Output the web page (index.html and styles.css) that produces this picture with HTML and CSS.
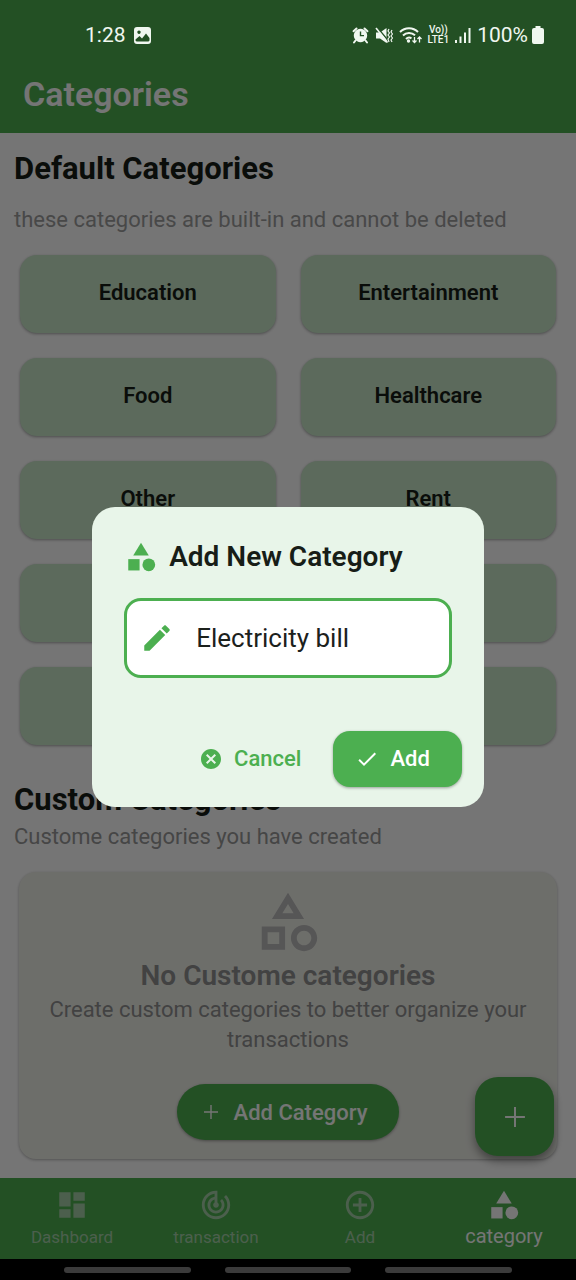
FILE: index.html
```html
<!DOCTYPE html>
<html lang="en">
<head>
<meta charset="utf-8">
<meta name="viewport" content="width=device-width, initial-scale=1">
<title>Categories</title>
<link rel="stylesheet" href="styles.css">
</head>
<body>
<svg class="sprite" aria-hidden="true">
  <symbol id="category" viewBox="0 0 24 24"><path d="M12 2l-5.500 9h11z"/><circle cx="17.500" cy="17.500" r="4.500"/><path d="M3 13.500h8v8H3z"/></symbol>
  <symbol id="plus" viewBox="0 0 24 24"><path d="M19 12.700h-6.300V19h-1.400v-6.300H5v-1.400h6.300V5h1.400v6.300H19z"/></symbol>
</svg>
<div class="app">
  <header class="app-bar">
    <div class="status">
      <div class="status-side">
        <span>1:28</span>
        <svg class="status-photo" viewBox="0 0 17 17"><path fill-rule="evenodd" d="M3 0h11a3 3 0 0 1 3 3v11a3 3 0 0 1-3 3H3a3 3 0 0 1-3-3V3a3 3 0 0 1 3-3zM1.500 12.500v1l1 1h12l1-1v-2.500l-3.500-4.500-4 5-2.500-2.500zM5 3.500a1.700 1.700 0 1 0 .01 0z"/></svg>
      </div>
      <div class="status-side status-right">
        <svg width="17" height="17" viewBox="0 0 17 17"><path fill-rule="evenodd" d="M8.500 1.800a6.700 6.700 0 1 1-.01 0zM7.800 4.500v4.800h4.200V8H9.200V4.500z"/><path d="M1.500 4.200l3-2.700M15.500 4.200l-3-2.700M3.500 13.500L2 15.500M13.500 13.500l1.500 2" fill="none" stroke="currentColor" stroke-width="2" stroke-linecap="round"/></svg>
        <svg width="18" height="17" viewBox="0 0 18 17"><path d="M1 5.500h4L11.500 1v15L5 11.500H1z"/><path d="M2 0l11.500 14" stroke="#245226" stroke-width="1.400"/><path d="M1 1l11.500 14.500" fill="none" stroke="currentColor" stroke-width="1.600"/><path d="M14 2l-1 2 1.500 2-1.500 2 1.500 2-1.500 2 1 3M17 3l-1 2 1.500 2-1.500 2 1.500 2-1.500 2 1 2" fill="none" stroke="currentColor" stroke-width="1.200"/></svg>
        <svg width="23" height="17" viewBox="0 0 23 17"><path d="M1 5a12.500 12.500 0 0 1 18 0M4 8.500a8.500 8.500 0 0 1 12-.200M7 12a4.500 4.500 0 0 1 5.500-.700" fill="none" stroke="currentColor" stroke-width="2"/><circle cx="9.500" cy="14" r="1.700"/><path d="M15.500 10v5.500m-2-2l2 2 2-2M20.500 15.500V10m-2 2l2-2 2 2" fill="none" stroke="currentColor" stroke-width="1.300"/></svg>
        <span class="volte"><span>Vo))</span><span>LTE1</span></span>
        <svg width="16" height="17" viewBox="0 0 16 17"><path d="M0 13h2v3H0zM4.500 9.500h2V16h-2zM9 5.500h2V16H9zM13.500 1h2v15h-2z"/></svg>
        <span class="charge">100%</span>
        <svg width="12" height="18" viewBox="0 0 12 18"><path d="M3.500 0h5v2H10a2 2 0 0 1 2 2v12a2 2 0 0 1-2 2H2a2 2 0 0 1-2-2V4a2 2 0 0 1 2-2h1.500z"/></svg>
      </div>
    </div>
    <h1>Categories</h1>
  </header>

  <main class="page">
    <section>
      <h2>Default Categories</h2>
      <p class="note note-default">these categories are built-in and cannot be deleted</p>
      <div class="tiles">
        <div class="tile">Education</div><div class="tile">Entertainment</div>
        <div class="tile">Food</div><div class="tile">Healthcare</div>
        <div class="tile">Other</div><div class="tile">Rent</div>
        <div class="tile"></div><div class="tile"></div>
        <div class="tile"></div><div class="tile"></div>
      </div>
    </section>
    <section class="custom">
      <h2>Custom Categories</h2>
      <p class="note">Custome categories you have created</p>
      <div class="empty">
        <svg class="empty-icon" viewBox="0 0 24 24"><path fill-rule="evenodd" d="M12 2l-5.500 9h11L12 2zm0 3.840L13.930 9h-3.870L12 5.840zM17.500 13c-2.490 0-4.500 2.010-4.500 4.500s2.010 4.500 4.500 4.500 4.500-2.010 4.500-4.500-2.010-4.500-4.500-4.500zm0 7c-1.380 0-2.500-1.120-2.500-2.500s1.120-2.500 2.500-2.500 2.500 1.120 2.500 2.500-1.120 2.500-2.500 2.500zM3 21.500h8v-8H3v8zm2-6h4v4H5v-4z"/></svg>
        <h3>No Custome categories</h3>
        <p>Create custom categories to better organize your transactions</p>
        <button class="button pill" type="button"><svg><use href="#plus"/></svg>Add Category</button>
      </div>
    </section>
    <button class="fab" type="button" aria-label="Add"><svg><use href="#plus"/></svg></button>
  </main>

  <nav class="tabs">
    <a href="#dashboard"><svg viewBox="0 0 24 24"><path d="M3 13h8V3H3v10zm0 8h8v-6H3v6zm10 0h8V11h-8v10zm0-18v6h8V3h-8z"/></svg><span>Dashboard</span></a>
    <a href="#transaction"><svg viewBox="0 0 24 24"><path d="M19.070 4.930l-1.410 1.410C19.100 7.790 20 9.790 20 12c0 4.420-3.580 8-8 8s-8-3.580-8-8c0-4.080 3.050-7.440 7-7.930v2.020C8.160 6.570 6 9.030 6 12c0 3.310 2.690 6 6 6s6-2.690 6-6c0-1.660-.670-3.160-1.760-4.240l-1.410 1.410C15.550 9.900 16 10.900 16 12c0 2.210-1.790 4-4 4s-4-1.790-4-4c0-1.860 1.280-3.410 3-3.860v2.140c-.600.350-1 .980-1 1.720 0 1.100.900 2 2 2s2-.900 2-2c0-.740-.400-1.380-1-1.720V2h-1C6.480 2 2 6.480 2 12s4.480 10 10 10 10-4.480 10-10c0-2.760-1.120-5.260-2.930-7.070z"/></svg><span>transaction</span></a>
    <a href="#add"><svg viewBox="0 0 24 24"><path fill-rule="evenodd" d="M13 7h-2v4H7v2h4v4h2v-4h4v-2h-4V7zm-1-5C6.480 2 2 6.480 2 12s4.480 10 10 10 10-4.480 10-10S17.520 2 12 2zm0 18c-4.410 0-8-3.590-8-8s3.590-8 8-8 8 3.590 8 8-3.590 8-8 8z"/></svg><span>Add</span></a>
    <a class="current" href="#category-tab" aria-current="page"><svg><use href="#category"/></svg><span>category</span></a>
  </nav>
  <div class="system-bar"><i></i><i></i><i></i></div>

  <div class="scrim">
    <form class="dialog" role="dialog" aria-labelledby="dialog-title">
      <h2 id="dialog-title"><svg><use href="#category"/></svg>Add New Category</h2>
      <div class="field">
        <svg viewBox="0 0 24 24"><path d="M3 17.250V21h3.750L17.810 9.940l-3.750-3.750L3 17.250zM20.710 7.040c.390-.390.390-1.020 0-1.410l-2.340-2.340c-.390-.390-1.020-.390-1.410 0l-1.830 1.830 3.750 3.750 1.830-1.830z"/></svg>
        <input type="text" value="Electricity bill" aria-labelledby="dialog-title">
      </div>
      <div class="actions">
        <button class="button text" type="button"><svg viewBox="0 0 24 24"><path fill-rule="evenodd" d="M12 2C6.470 2 2 6.470 2 12s4.470 10 10 10 10-4.470 10-10S17.530 2 12 2zm5 13.590L15.590 17 12 13.410 8.410 17 7 15.590 10.590 12 7 8.410 8.410 7 12 10.590 15.590 7 17 8.410 13.410 12 17 15.590z"/></svg>Cancel</button>
        <button class="button" type="button"><svg viewBox="0 0 24 24"><path d="M9 16.170L4.830 12l-1.420 1.410L9 19 21 7l-1.410-1.410z"/></svg>Add</button>
      </div>
    </form>
  </div>
</div>
</body>
</html>
```
FILE: styles.css
```css
:root {
  --green: #4caf50;
  --mint: #c8e6c9;
  --pale: #e8f5e9;
}

* { box-sizing: border-box; }

body {
  margin: 0;
  background: #fff;
  color: #171d17;
  font-family: Roboto, "Liberation Sans", sans-serif;
}

h1, h2, h3, p { margin: 0; }
svg { display: block; flex: none; fill: currentColor; }
button, input { font: inherit; }
.sprite { position: absolute; width: 0; height: 0; }

.app {
  position: relative;
  display: flex;
  flex-direction: column;
  min-height: 100vh;
}

.app-bar {
  height: 133px;
  background: var(--green);
  color: #fff;
}
.app-bar h1 {
  padding: 4px 23px;
  font-size: 34px;
  font-weight: 600;
  line-height: 40px;
}
.status {
  position: relative;
  z-index: 2;
  display: flex;
  justify-content: space-between;
  height: 70px;
  padding: 0 32px 0 85px;
  color: #f0f7f0;
  font-size: 21px;
}
.status-side { display: flex; align-items: center; gap: 8px; }
.status-right { gap: 6px; }
.status-photo { width: 17px; height: 17px; }
.volte {
  display: grid;
  font-size: 10px;
  font-weight: 500;
  line-height: 10px;
  text-align: center;
}
.charge { margin-right: -2px; }

.page {
  position: relative;
  flex: 1;
  padding: 18px 14px 18px;
}
.page h2 { font-size: 31px; line-height: 36px; }
.note {
  color: #9e9e9e;
  font-size: 22px;
  line-height: 28px;
}
.note-default { margin-top: 19px; }
.tiles {
  display: grid;
  grid-template-columns: 1fr 1fr;
  gap: 25px;
  margin: 21px 6px 0;
}
.tile {
  display: grid;
  place-items: center;
  height: 78px;
  padding-bottom: 3px;
  border-radius: 17px;
  background: var(--mint);
  box-shadow: 0 1px 3px rgba(0, 0, 0, .35);
  font-size: 22px;
  font-weight: 600;
}
.custom { margin-top: 37px; }
.custom .note { margin-top: 5px; color: #989898; }

.empty {
  display: flex;
  flex-direction: column;
  align-items: center;
  margin: 21px 5px 0;
  padding: 15px 22px 19px;
  border-radius: 17px;
  background: #eeefe8;
  box-shadow: 0 1px 3px rgba(0, 0, 0, .3);
  color: #909090;
  text-align: center;
}
.empty-icon { width: 70px; height: 70px; color: #bbb; }
.empty h3 { font-size: 28px; font-weight: 600; line-height: 38px; }
.empty p { font-size: 22px; line-height: 30px; }
.empty .button { margin-top: 29px; }

.button {
  display: flex;
  align-items: center;
  gap: 11px;
  height: 56px;
  padding: 0 32px 0 22px;
  border: 0;
  border-radius: 17px;
  background: var(--green);
  box-shadow: 0 1px 3px rgba(0, 0, 0, .35);
  color: #fff;
  font-size: 22px;
  font-weight: 500;
}
.button svg { width: 24px; height: 24px; }
.button.pill { border-radius: 28px; }
.button.text { background: none; box-shadow: none; color: var(--green); }

.fab {
  position: absolute;
  right: 22px;
  bottom: 22px;
  display: grid;
  place-items: center;
  width: 79px;
  height: 79px;
  border: 0;
  border-radius: 23px;
  background: var(--green);
  box-shadow: 0 5px 10px rgba(0, 0, 0, .4);
  color: #fff;
}
.fab svg { width: 34px; height: 34px; }

.tabs {
  display: grid;
  grid-template-columns: repeat(4, 1fr);
  height: 81px;
  background: var(--green);
}
.tabs a {
  display: flex;
  flex-direction: column;
  align-items: center;
  padding-top: 10px;
  color: #a6cfa8;
  font-size: 17px;
  line-height: 30px;
  text-decoration: none;
}
.tabs svg { width: 34px; height: 34px; }
.tabs .current { color: #fff; font-size: 20px; line-height: 28px; }

.system-bar {
  display: flex;
  justify-content: center;
  align-items: center;
  gap: 34px;
  height: 21px;
  background: #000;
}
.system-bar i {
  width: 22%;
  height: 6px;
  border-radius: 3px;
  background: #808080;
}

.scrim {
  position: absolute;
  inset: 0;
  z-index: 1;
  display: flex;
  align-items: center;
  padding: 33px 16% 0;
  background: rgba(0, 0, 0, .54);
}
.dialog {
  flex: 1;
  min-width: 0;
  padding: 32px 22px 20px 32px;
  border-radius: 23px;
  background: var(--pale);
}
.dialog h2 {
  display: flex;
  align-items: center;
  gap: 11px;
  font-size: 28px;
  font-weight: 600;
  line-height: 36px;
}
.dialog h2 svg { width: 34px; height: 34px; color: var(--green); }
.field {
  display: flex;
  align-items: center;
  gap: 22px;
  height: 80px;
  margin: 23px 10px 0 0;
  padding: 0 13px;
  border: 3px solid var(--green);
  border-radius: 17px;
  background: #fff;
}
.field svg { width: 34px; height: 34px; color: var(--green); }
.field input {
  flex: 1;
  min-width: 0;
  padding: 0;
  border: 0;
  outline: 0;
  background: none;
  color: #1c211c;
  font-size: 26px;
}
.actions {
  display: flex;
  justify-content: flex-end;
  margin-top: 53px;
}
```
